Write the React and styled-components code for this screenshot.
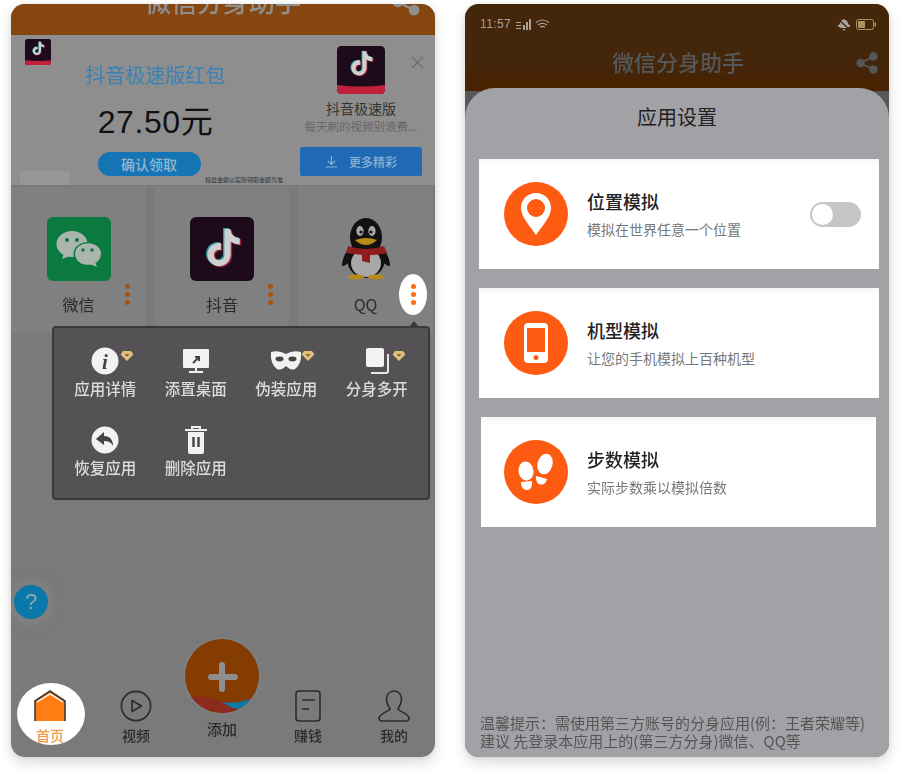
import React from 'react';
import styled, { createGlobalStyle } from 'styled-components';

const cjk = `"Noto Sans CJK SC", "Liberation Sans", sans-serif`;

const Global = createGlobalStyle`
    body {
        margin: 0;
        background: #fff;
        font-family: ${cjk};
    }
`

const Page = styled.div`
    display: flex;
    align-items: flex-start;
    gap: 30px;
    padding: 4px 11px;
    width: 900px;
    height: 774px;
    box-sizing: border-box;
    overflow: hidden;
`
const Phone = styled.section`
    position: relative;
    width: 424px;
    height: 753px;
    border-radius: 14px;
    overflow: hidden;
    display: flex;
    flex-direction: column;
    background: ${p => p.$bg};
    filter: blur(0.45px);
`
const Frame = styled.div`
    border-radius: 14px;
    box-shadow: 0 6px 14px rgba(0, 0, 0, .14), 0 0 5px rgba(0, 0, 0, .08);
`

/* left phone */
const TopBar = styled.header`
    flex: 0 0 31px;
    background: #85460f;
    display: flex;
    justify-content: center;
    position: relative;
    overflow: hidden;
`
const TopTitle = styled.h1`
    margin: -18px 0 0;
    font-size: 26px;
    line-height: 30px;
    font-weight: 500;
    color: #8f8f8f;
`
const TopShare = styled.div`
    position: absolute;
    right: 15px;
    top: -16px;
`
const Ad = styled.div`
    flex: 0 0 150px;
    display: flex;
    position: relative;
    background: #8e8e8e;
`
const AdMain = styled.div`
    flex: 0 0 276px;
    display: flex;
    flex-direction: column;
    align-items: center;
    padding-top: 28px;
    box-sizing: border-box;
`
const AdTitle = styled.div`
    margin-left: 12px;
    font-size: 20px;
    line-height: 24px;
    color: #3a82b5;
`
const Price = styled.div`
    margin: 15px 0 0 13px;
    font-size: 32px;
    line-height: 40px;
    color: #111;
    font-family: "Liberation Sans", ${cjk};
    letter-spacing: .6px;
`
const Claim = styled.div`
    margin-top: 10px;
    width: 103px;
    height: 24px;
    border-radius: 12px;
    background: #1675b5;
    color: #93b6cf;
    font-size: 14px;
    font-weight: 500;
    line-height: 24px;
    text-align: center;
`
const AdSide = styled.div`
    flex: 1;
    display: flex;
    flex-direction: column;
    align-items: center;
    padding-top: 11px;
`
const AppName = styled.div`
    margin-top: 4px;
    font-size: 14px;
    line-height: 20px;
    color: #333;
`
const AppSub = styled.div`
    font-size: 11.5px;
    line-height: 16px;
    color: #666;
    white-space: nowrap;
`
const More = styled.div`
    margin-top: 13px;
    width: 122px;
    height: 29px;
    border-radius: 2px;
    background: #2069b4;
    color: #8fb0d0;
    font-size: 12px;
    font-weight: 500;
    display: flex;
    align-items: center;
    justify-content: center;
    gap: 11px;
`
const SmallLogo = styled.div`
    position: absolute;
    left: 14px;
    top: 4px;
`
const AdClose = styled.div`
    position: absolute;
    right: 11px;
    top: 15px;
`
const AdTag = styled.div`
    position: absolute;
    left: 9px;
    bottom: 0;
    width: 50px;
    height: 14px;
    background: #979797;
`
const FinePrint = styled.div`
    position: absolute;
    left: 194px;
    bottom: 1px;
    font-size: 6px;
    line-height: 8px;
    color: #333;
    white-space: nowrap;
`
const AppGrid = styled.div`
    margin-top: 2px;
    display: grid;
    grid-template-columns: 135px 134px 135px;
    gap: 9px;
`
const AppCell = styled.div`
    position: relative;
    height: 146px;
    background: #808080;
    display: flex;
    flex-direction: column;
    align-items: center;
    padding-top: 30px;
    box-sizing: border-box;
`
const AppLabel = styled.div`
    margin-top: 13px;
    font-size: 16px;
    line-height: 20px;
    color: #2a2a2a;
`
const Dots = styled.div`
    position: absolute;
    right: ${p => p.$lit ? '6px' : '5px'};
    top: ${p => p.$lit ? '87px' : '96px'};
    width: 28px;
    height: ${p => p.$lit ? '41px' : '23px'};
    border-radius: 50%;
    background: ${p => p.$lit ? '#fff' : 'transparent'};
    display: flex;
    flex-direction: column;
    align-items: center;
    justify-content: center;
    gap: 3px;

    i {
        width: 5px;
        height: 5px;
        border-radius: 50%;
        background: ${p => p.$lit ? '#ff6a12' : '#a5530d'};
    }
`
const Menu = styled.div`
    position: absolute;
    left: 41px;
    top: 322px;
    width: 378px;
    height: 174px;
    box-sizing: border-box;
    border: 2px solid #38383a;
    border-radius: 4px;
    background: #555256;
    display: grid;
    grid-template-columns: repeat(4, 90.5px);
    grid-auto-rows: 79px;
    padding: 19px 0 0 6px;

    &::before {
        content: "";
        position: absolute;
        right: 9px;
        top: -7px;
        border-left: 5px solid transparent;
        border-right: 5px solid transparent;
        border-bottom: 6px solid #38383a;
    }
`
const MenuItem = styled.div`
    position: relative;
    display: flex;
    flex-direction: column;
    align-items: center;
    color: #dcdcdc;
    font-size: 15.5px;
    font-weight: 500;
    line-height: 20px;

    svg.main {
        height: 28px;
        width: 32px;
        margin-bottom: 3px;
    }
`
const Gem = styled.div`
    position: absolute;
    left: 60px;
    top: -2px;
`
const Help = styled.div`
    position: absolute;
    left: 3px;
    top: 581px;
    width: 34px;
    height: 34px;
    border-radius: 50%;
    background: #0a78a8;
    box-shadow: 0 0 0 6px #7f7f7f, 0 0 8px 8px rgba(130, 130, 130, .5);
    color: #8fa9b5;
    font: 400 22px/34px "Liberation Sans", sans-serif;
    text-align: center;
`
const TabBar = styled.nav`
    margin-top: auto;
    height: 82px;
    margin-left: -4px;
    display: grid;
    grid-template-columns: repeat(5, 86px);
    border-top: 1px solid #7e7e7e;
    box-sizing: border-box;
`
const Tab = styled.div`
    position: relative;
    display: flex;
    flex-direction: column;
    align-items: center;
    padding-top: 14px;
    font-size: 14px;
    font-weight: 500;
    line-height: 20px;
    color: ${p => p.$active ? '#f59a45' : '#2b2b2b'};

    svg { position: relative; }
    span { position: relative; margin-top: 3px; }

    ${p => p.$active && `
        &::before {
            content: "";
            position: absolute;
            left: 10px;
            top: 7px;
            width: 68px;
            height: 62px;
            border-radius: 50%;
            background: #fff;
        }
    `}
`
const AddTab = styled(Tab)`
    padding-top: 0;
    margin-top: -39px;
    font-size: 15px;

    span { margin-top: 4px; }
`

/* right phone */
const DarkHead = styled.header`
    flex: 0 0 87px;
    background: linear-gradient(#44260a 70%, #4a2100);
    display: flex;
    flex-direction: column;
`
const Status = styled.div`
    display: flex;
    align-items: center;
    gap: 4px;
    padding: 11px 13px 0 15px;
    height: 18px;
    font: 12px/18px "Liberation Sans", sans-serif;
    letter-spacing: .4px;
    color: #a8a29a;
`
const StatusEnd = styled.div`
    margin-left: auto;
    display: flex;
    align-items: center;
    gap: 5px;
`
const HeadRow = styled.div`
    position: relative;
    margin: 13px 0 0 2px;
    text-align: center;
    font-size: 22px;
    line-height: 30px;
    font-weight: 500;
    color: #55585a;
`
const HeadShare = styled.div`
    position: absolute;
    right: 11px;
    top: 3px;
`
const Sheet = styled.div`
    flex: 1;
    margin-top: -3px;
    border-radius: 30px 30px 0 0;
    background: #a2a1a6;
    display: flex;
    flex-direction: column;
`
const SheetTitle = styled.h2`
    margin: 0;
    padding-top: 17px;
    font-size: 20px;
    line-height: 24px;
    font-weight: 400;
    color: #222;
    text-align: center;
`
const Cards = styled.div`
    margin-top: 30px;
    display: flex;
    flex-direction: column;
    gap: 19px;
`
const Card = styled.div`
    height: 110px;
    margin: 0 ${p => p.$inset ? 13 : 10}px 0 ${p => p.$inset ? 16 : 14}px;
    padding-left: ${p => p.$inset ? 23 : 25}px;
    padding-right: 18px;
    background: #fff;
    box-shadow: inset 0 6px 8px -6px rgba(0, 0, 0, .09);
    display: flex;
    align-items: center;
    gap: 19px;
`
const Round = styled.div`
    flex: 0 0 64px;
    height: 64px;
    border-radius: 50%;
    background: #fd5a12;
    display: flex;
    align-items: center;
    justify-content: center;
`
const CardText = styled.div`
    display: flex;
    flex-direction: column;
    gap: 7px;
`
const CardTitle = styled.div`
    font-size: 18px;
    font-weight: 500;
    line-height: 22px;
    color: #222;
`
const CardSub = styled.div`
    font-size: 14px;
    line-height: 20px;
    color: #777;
`
const Toggle = styled.div`
    margin-left: auto;
    width: 51px;
    height: 25px;
    box-sizing: border-box;
    border: 2px solid #c6c6c6;
    border-radius: 13px;
    background: #c6c6c6;

    i {
        display: block;
        width: 21px;
        height: 21px;
        border-radius: 50%;
        background: #fff;
    }
`
const Note = styled.p`
    margin: auto 0 0;
    padding: 0 10px 7px 15px;
    font-size: 15px;
    line-height: 18px;
    color: #555;
    white-space: nowrap;
`

const NOTE_PATH = 'M12.525.02c1.31-.02 2.61-.01 3.91-.02.08 1.53.63 3.09 1.75 4.17 1.12 1.11 2.7 1.62 4.24 1.79v4.03c-1.44-.05-2.89-.35-4.2-.97-.57-.26-1.1-.59-1.62-.93-.01 2.92.01 5.84-.02 8.75-.08 1.4-.54 2.79-1.35 3.94-1.31 1.92-3.58 3.17-5.91 3.21-1.43.08-2.86-.31-4.08-1.03-2.02-1.19-3.44-3.37-3.65-5.71-.02-.5-.03-1-.01-1.49.18-1.9 1.12-3.72 2.58-4.96 1.66-1.44 3.98-2.13 6.15-1.72.02 1.48-.04 2.96-.04 4.44-.99-.32-2.15-.23-3.02.37-.63.41-1.11 1.04-1.36 1.75-.21.51-.15 1.07-.14 1.61.24 1.64 1.82 3.02 3.5 2.87 1.12-.01 2.19-.66 2.77-1.61.19-.33.4-.67.41-1.06.1-1.79.06-3.57.07-5.36.01-4.03-.01-8.05.02-12.07z';

function TikTok({ size, lite }) {
    return (
        <svg width={size} height={size} viewBox="0 0 64 64">
            <rect width="64" height="64" rx="6" fill="#1d0a1a" />
            <g transform={lite ? 'translate(17 7) scale(1.35)' : 'translate(15 12) scale(1.55)'}>
                <path d={NOTE_PATH} fill="#2a9ba0" transform="translate(-.9 -.6)" />
                <path d={NOTE_PATH} fill="#a0263c" transform="translate(.9 .6)" />
                <path d={NOTE_PATH} fill="#d0cfd0" />
            </g>
            {lite && <path d="M0 52q32 4 64 0v6a6 6 0 0 1-6 6H6a6 6 0 0 1-6-6z" fill="#c0203a" />}
        </svg>
    );
}

function WeChat() {
    return (
        <svg width="64" height="64" viewBox="0 0 64 64">
            <rect width="64" height="64" rx="6" fill="#0a7a3f" />
            <ellipse cx="25" cy="27" rx="15.5" ry="13" fill="#a9b5ad" />
            <path d="M17 36l-2 6 8-3z" fill="#a9b5ad" />
            <ellipse cx="41" cy="37" rx="14.5" ry="12" fill="#0a7a3f" />
            <ellipse cx="41" cy="37" rx="13" ry="10.8" fill="#a9b5ad" />
            <path d="M48 45l2 5-7-3z" fill="#a9b5ad" />
            <circle cx="20" cy="23" r="2" fill="#0a7a3f" />
            <circle cx="30" cy="23" r="2" fill="#0a7a3f" />
            <circle cx="36" cy="33" r="1.7" fill="#0a7a3f" />
            <circle cx="45" cy="33" r="1.7" fill="#0a7a3f" />
        </svg>
    );
}

function Penguin() {
    return (
        <svg width="64" height="64" viewBox="0 0 64 64">
            <path d="M14 32c-4 6-6 12-6 17 3 0 5-2 7-4zM50 32c4 6 6 12 6 17-3 0-5-2-7-4z" fill="#111" />
            <ellipse cx="32" cy="20" rx="16" ry="19" fill="#111" />
            <ellipse cx="32" cy="42" rx="19" ry="19" fill="#111" />
            <ellipse cx="32" cy="46" rx="15" ry="14" fill="#a8a8a8" />
            <ellipse cx="26" cy="14" rx="3.6" ry="5" fill="#a8a8a8" />
            <ellipse cx="38" cy="14" rx="3.6" ry="5" fill="#a8a8a8" />
            <circle cx="27" cy="15" r="1.6" fill="#111" />
            <circle cx="37" cy="15" r="1.6" fill="#111" />
            <path d="M21 23q11-4 22 0-5 5-11 5t-11-5z" fill="#b98a14" />
            <path d="M14 29q18 6 36 0l3 7q-10 2-17 2v8l-8-2v-6q-7-1-16-2z" fill="#8f1d1d" />
            <ellipse cx="22" cy="60" rx="8" ry="2.6" fill="#b98a14" />
            <ellipse cx="42" cy="60" rx="8" ry="2.6" fill="#b98a14" />
        </svg>
    );
}

function Share({ color, size }) {
    return (
        <svg width={size} height={size} viewBox="0 0 24 24" fill={color} stroke={color} strokeWidth="2">
            <circle cx="19" cy="5" r="3.6" />
            <circle cx="5" cy="12" r="3.6" />
            <circle cx="19" cy="19" r="3.6" />
            <path d="M5 12l14-7M5 12l14 7" fill="none" />
        </svg>
    );
}

function Diamond() {
    return (
        <svg width="14" height="12" viewBox="0 0 14 12">
            <path d="M3 1h8l2.4 3.4L7 11 .6 4.4z" fill="#e3c07a" />
            <path d="M4.5 4h5L7 7z" fill="#7a6a55" />
        </svg>
    );
}

const menuIcons = {
    info: (
        <svg className="main" viewBox="0 0 32 28">
            <circle cx="16" cy="14" r="13.5" fill="#f2f2f2" />
            <text x="16" y="22" textAnchor="middle" fontSize="21" fontStyle="italic" fontWeight="700" fontFamily="Liberation Serif, serif" fill="#444">i</text>
        </svg>
    ),
    screen: (
        <svg className="main" viewBox="0 0 32 28">
            <rect x="3" y="2" width="26" height="19" rx="1" fill="#f2f2f2" />
            <path d="M9 25h14M16 21v4" stroke="#f2f2f2" strokeWidth="2" />
            <path d="M13 16l6-6m-4 0h4v4" stroke="#444" strokeWidth="2" fill="none" />
        </svg>
    ),
    mask: (
        <svg className="main" viewBox="0 0 32 28">
            <path d="M1 5q8-2 15 2 7-4 15-2 1 12-6 17-4 2-9-3-5 5-9 3Q0 17 1 5z" fill="#f2f2f2" />
            <ellipse cx="9.5" cy="12" rx="4" ry="2.4" fill="#444" />
            <ellipse cx="22.5" cy="12" rx="4" ry="2.4" fill="#444" />
        </svg>
    ),
    clone: (
        <svg className="main" viewBox="0 0 32 28">
            <rect x="5" y="1" width="18" height="19" rx="2" fill="#f2f2f2" />
            <path d="M27 7v17a2 2 0 0 1-2 2H10" stroke="#e8e8e8" strokeWidth="2" fill="none" />
        </svg>
    ),
    undo: (
        <svg className="main" viewBox="0 0 32 28">
            <circle cx="16" cy="14" r="13.5" fill="#f2f2f2" />
            <path d="M15 6L7 13l8 6v-4c4 0 7 1 9 5 0-6-3-10-9-10z" fill="#444" />
        </svg>
    ),
    trash: (
        <svg className="main" viewBox="0 0 32 28">
            <path d="M5 4h22M12 4V1h8v3" stroke="#f2f2f2" strokeWidth="2" fill="none" />
            <path d="M8 6h16v20a2 2 0 0 1-2 2H10a2 2 0 0 1-2-2z" fill="#f2f2f2" />
            <path d="M13.5 11v10M18.5 11v10" stroke="#444" strokeWidth="2.4" />
        </svg>
    ),
};

const menu = [
    { label: '应用详情', icon: 'info', gem: true },
    { label: '添置桌面', icon: 'screen' },
    { label: '伪装应用', icon: 'mask', gem: true },
    { label: '分身多开', icon: 'clone', gem: true },
    { label: '恢复应用', icon: 'undo' },
    { label: '删除应用', icon: 'trash' },
];

function ThreeDots({ lit }) {
    return <Dots $lit={lit}><i /><i /><i /></Dots>;
}

function LeftPhone() {
    return (
        <Phone $bg="#7a7a7a">
            <TopBar>
                <TopTitle>微信分身助手</TopTitle>
                <TopShare><Share color="#8f8f8f" size={28} /></TopShare>
            </TopBar>
            <Ad>
                <SmallLogo><TikTok size={26} lite /></SmallLogo>
                <AdMain>
                    <AdTitle>抖音极速版红包</AdTitle>
                    <Price>27.50元</Price>
                    <Claim>确认领取</Claim>
                </AdMain>
                <AdSide>
                    <TikTok size={48} lite />
                    <AppName>抖音极速版</AppName>
                    <AppSub>每天刷的视频别浪费...</AppSub>
                    <More>
                        <svg width="13" height="13" viewBox="0 0 13 13" fill="none" stroke="#8fb0d0" strokeWidth="1.2">
                            <path d="M6.5 1v8M3 6l3.5 3.5L10 6M1 12h11" />
                        </svg>
                        更多精彩
                    </More>
                </AdSide>
                <AdClose>
                    <svg width="13" height="13" viewBox="0 0 13 13" stroke="#6f6f6f" strokeWidth="1.2">
                        <path d="M1 1l11 11M12 1L1 12" />
                    </svg>
                </AdClose>
                <AdTag />
                <FinePrint>权益金额以实际领取金额为准</FinePrint>
            </Ad>
            <AppGrid>
                <AppCell>
                    <WeChat />
                    <AppLabel>微信</AppLabel>
                    <ThreeDots />
                </AppCell>
                <AppCell>
                    <TikTok size={64} />
                    <AppLabel>抖音</AppLabel>
                    <ThreeDots />
                </AppCell>
                <AppCell>
                    <Penguin />
                    <AppLabel>QQ</AppLabel>
                    <ThreeDots lit />
                </AppCell>
            </AppGrid>
            <Menu>
                {menu.map(m => (
                    <MenuItem key={m.label}>
                        {menuIcons[m.icon]}
                        {m.gem && <Gem><Diamond /></Gem>}
                        {m.label}
                    </MenuItem>
                ))}
            </Menu>
            <Help>?</Help>
            <TabBar>
                <Tab $active>
                    <svg width="32" height="32" viewBox="0 0 32 32">
                        <path d="M1 31V11L16 1l15 10v20z" fill="#ff7d12" />
                        <path d="M1 31V11L16 1l15 10v20" fill="none" stroke="#3a3a3a" strokeWidth="1.6" />
                        <path d="M3 12L16 4l13 8" fill="none" stroke="#fff" strokeWidth="1.4" />
                    </svg>
                    <span>首页</span>
                </Tab>
                <Tab>
                    <svg width="32" height="32" viewBox="0 0 32 32" fill="none" stroke="#2b2b2b" strokeWidth="1.6">
                        <circle cx="16" cy="16" r="14.6" />
                        <path d="M12 10.5l9.5 5.5-9.5 5.5z" strokeLinejoin="round" />
                    </svg>
                    <span>视频</span>
                </Tab>
                <AddTab>
                    <svg width="78" height="78" viewBox="0 0 78 78">
                        <defs>
                            <clipPath id="addClip"><circle cx="39" cy="39" r="37" /></clipPath>
                        </defs>
                        <circle cx="39" cy="39" r="39" fill="#7f7f7f" />
                        <circle cx="39" cy="39" r="37" fill="#843c00" />
                        <g clipPath="url(#addClip)">
                            <path d="M5 60Q22 58 38 64Q50 70 60 78H0z" fill="#8c2a1e" />
                            <path d="M38 65Q55 68 72 60V64Q58 74 50 71z" fill="#0a7aa8" />
                        </g>
                        <path d="M39 28v24M28 40h24" stroke="#8e8e8e" strokeWidth="6" strokeLinecap="round" />
                    </svg>
                    <span>添加</span>
                </AddTab>
                <Tab>
                    <svg width="32" height="32" viewBox="0 0 32 32" fill="none" stroke="#2b2b2b" strokeWidth="1.6">
                        <rect x="4" y="1" width="24" height="30" rx="3" />
                        <path d="M10 10h13M10 19h7" />
                    </svg>
                    <span>赚钱</span>
                </Tab>
                <Tab>
                    <svg width="32" height="32" viewBox="0 0 32 32" fill="none" stroke="#2b2b2b" strokeWidth="1.6">
                        <path d="M16 1c5 0 7.500 4 7.500 8.500S21 17 20 19c0 2 10 4 11 9 0 2-1 3-3 3H4c-2 0-3-1-3-3 1-5 11-7 11-9-1-2-3.500-5-3.500-9.500S11 1 16 1z" />
                    </svg>
                    <span>我的</span>
                </Tab>
            </TabBar>
        </Phone>
    );
}

const rows = [
    {
        title: '位置模拟',
        sub: '模拟在世界任意一个位置',
        toggle: true,
        icon: (
            <svg width="34" height="44" viewBox="0 0 34 44">
                <path d="M17 1C8 1 2 8 2 16c0 9 9 18 15 27 6-9 15-18 15-27C32 8 26 1 17 1z" fill="#fff" />
                <circle cx="17" cy="16" r="9" fill="#fd5a12" />
            </svg>
        ),
    },
    {
        title: '机型模拟',
        sub: '让您的手机模拟上百种机型',
        icon: (
            <svg width="26" height="42" viewBox="0 0 26 42">
                <rect x="1" y="1" width="24" height="40" rx="4" fill="#fff" />
                <rect x="4" y="6" width="18" height="24" rx="1" fill="#fd5a12" />
                <circle cx="13" cy="35.500" r="2.500" fill="#fd5a12" />
            </svg>
        ),
    },
    {
        title: '步数模拟',
        sub: '实际步数乘以模拟倍数',
        inset: true,
        icon: (
            <svg width="40" height="38" viewBox="0 0 40 38" fill="#fff">
                <ellipse cx="10" cy="18" rx="7.500" ry="9.500" transform="rotate(-8 10 18)" />
                <path d="M5 29l11-1c.5 5-1 9-5 9s-6-3-6-8z" />
                <ellipse cx="29" cy="11" rx="7.500" ry="10.500" transform="rotate(14 29 11)" />
                <path d="M20 23l11 3c-1 4-3.500 6-6.500 5.500S19.500 28 20 23z" />
            </svg>
        ),
    },
];

function RightPhone() {
    return (
        <Phone $bg="#565758">
            <DarkHead>
                <Status>
                    11:57
                    <svg width="16" height="11" viewBox="0 0 16 11" fill="#a8a29a">
                        <path d="M1 3h5v1H1zM1 6h5v1H1zM1 9h5v1H1zM8 6h2v5H8zM11 3h2v8h-2zM14 0h2v11h-2z" />
                    </svg>
                    <svg width="15" height="11" viewBox="0 0 15 11" fill="none" stroke="#a8a29a" strokeWidth="1.200">
                        <path d="M1 3.500q6.500-5 13 0M3 6q4.500-3.500 9 0M5.200 8.200q2.300-1.600 4.600 0" />
                    </svg>
                    <StatusEnd>
                        <svg width="14" height="13" viewBox="0 0 14 13" fill="#a8a29a">
                            <path d="M7 1l3 2 2 4 2 1-4 2H4L0 8l2-1 2-4zM5.500 11h3L7 13z" />
                            <path d="M1 1l12 11" stroke="#44260a" strokeWidth="1.200" />
                        </svg>
                        <svg width="20" height="11" viewBox="0 0 20 11">
                            <rect x=".5" y=".5" width="17" height="10" rx="2" fill="none" stroke="#a8945e" />
                            <rect x="2" y="2" width="7" height="7" fill="#a8945e" />
                            <rect x="18.500" y="3.500" width="1.500" height="4" fill="#a8945e" />
                        </svg>
                    </StatusEnd>
                </Status>
                <HeadRow>
                    微信分身助手
                    <HeadShare><Share color="#55585a" size={22} /></HeadShare>
                </HeadRow>
            </DarkHead>
            <Sheet>
                <SheetTitle>应用设置</SheetTitle>
                <Cards>
                    {rows.map(r => (
                        <Card key={r.title} $inset={r.inset}>
                            <Round>{r.icon}</Round>
                            <CardText>
                                <CardTitle>{r.title}</CardTitle>
                                <CardSub>{r.sub}</CardSub>
                            </CardText>
                            {r.toggle && <Toggle><i /></Toggle>}
                        </Card>
                    ))}
                </Cards>
                <Note>
                    温馨提示：需使用第三方账号的分身应用(例：王者荣耀等)<br />
                    建议 先登录本应用上的(第三方分身)微信、QQ等
                </Note>
            </Sheet>
        </Phone>
    );
}

function App() {
    return (
        <Page>
            <Global />
            <Frame><LeftPhone /></Frame>
            <Frame><RightPhone /></Frame>
        </Page>
    );
}

export default App;
